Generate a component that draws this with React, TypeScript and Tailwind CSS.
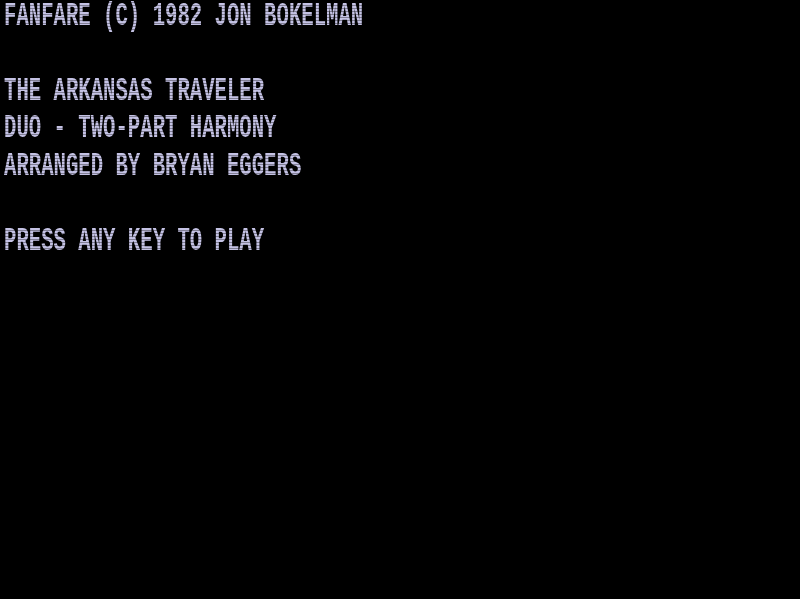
const lines = [
  "FANFARE (C) 1982 JON BOKELMAN",
  "",
  "THE ARKANSAS TRAVELER",
  "DUO - TWO-PART HARMONY",
  "ARRANGED BY BRYAN EGGERS",
  "",
  "PRESS ANY KEY TO PLAY",
];

export default function App() {
  return (
    <div className="relative h-[599px] w-[800px] overflow-hidden bg-black pl-1 font-['Liberation_Mono',monospace] text-[#c4c2e4]">
      {lines.map((line, i) => (
        <div key={i} className="h-[37.44px] whitespace-pre">
          <span className="inline-block origin-top-left scale-y-[1.57] text-[20.65px] font-bold leading-[20.8px] [filter:blur(0.3px)]">
            {line}
          </span>
        </div>
      ))}
      {/* scanlines */}
      <div className="pointer-events-none absolute inset-0 bg-[repeating-linear-gradient(to_bottom,transparent_0px,transparent_2px,rgba(0,0,0,0.35)_2px,rgba(0,0,0,0.35)_3px)]" />
    </div>
  );
}
